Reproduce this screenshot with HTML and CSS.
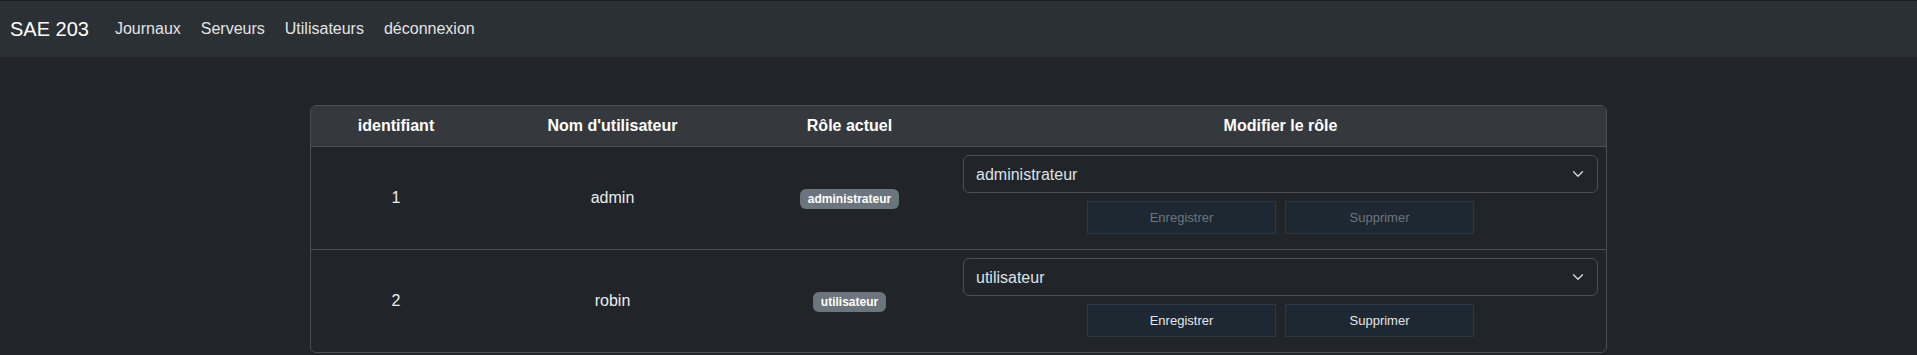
FILE: index.html
```html
<!DOCTYPE html>
<html lang="fr">
<head>
  <meta charset="UTF-8">
  <meta name="viewport" content="width=device-width, initial-scale=1.0">
  <title>SAE 203 - Utilisateurs</title>
  <link rel="stylesheet" href="styles.css">
</head>
<body>
  <!-- Barre de navigation -->
  <nav class="navbar">
    <a class="brand" href="#">SAE 203</a>
    <ul class="nav-links">
      <li><a href="#">Journaux</a></li>
      <li><a href="#">Serveurs</a></li>
      <li><a href="#">Utilisateurs</a></li>
      <li><a href="#">déconnexion</a></li>
    </ul>
  </nav>

  <!-- Liste des utilisateurs -->
  <div class="container">
    <div class="table-card">
      <table class="users">
        <thead>
          <tr>
            <th class="col-id">identifiant</th>
            <th class="col-name">Nom d'utilisateur</th>
            <th class="col-role">Rôle actuel</th>
            <th class="col-edit">Modifier le rôle</th>
          </tr>
        </thead>
        <tbody>
          <tr>
            <td>1</td>
            <td>admin</td>
            <td><span class="badge">administrateur</span></td>
            <td>
              <div class="select-wrap">
                <select>
                  <option selected>administrateur</option>
                  <option>utilisateur</option>
                </select>
                <svg class="chevron" viewBox="0 0 16 16"><path d="M2 5l6 6 6-6" fill="none" stroke="#dee2e6" stroke-width="1.6" stroke-linecap="round" stroke-linejoin="round"/></svg>
              </div>
              <div class="actions">
                <button type="button" disabled>Enregistrer</button>
                <button type="button" disabled>Supprimer</button>
              </div>
            </td>
          </tr>
          <tr>
            <td>2</td>
            <td>robin</td>
            <td><span class="badge">utilisateur</span></td>
            <td>
              <div class="select-wrap">
                <select>
                  <option>administrateur</option>
                  <option selected>utilisateur</option>
                </select>
                <svg class="chevron" viewBox="0 0 16 16"><path d="M2 5l6 6 6-6" fill="none" stroke="#dee2e6" stroke-width="1.6" stroke-linecap="round" stroke-linejoin="round"/></svg>
              </div>
              <div class="actions">
                <button type="button">Enregistrer</button>
                <button type="button">Supprimer</button>
              </div>
            </td>
          </tr>
        </tbody>
      </table>
    </div>
  </div>
</body>
</html>
```

FILE: styles.css
```css
* {
  margin: 0;
  padding: 0;
  box-sizing: border-box;
}
body {
  font-family: 'Liberation Sans', Arial, sans-serif;
  font-size: 16px;
  line-height: 1.5;
  background: #212529;
  color: #dee2e6;
}
/* Barre de navigation */
.navbar {
  display: flex;
  align-items: center;
  height: 57px;
  padding: 0 10px 0 10px;
  background: #2b3035;
  border-top: 1px solid #1c1f23;
}
.brand {
  font-size: 20px;
  color: #fff;
  text-decoration: none;
  margin-right: 16px;
}
.nav-links {
  display: flex;
  list-style: none;
}
.nav-links a {
  display: block;
  padding: 8px 10px;
  color: #e2e4e7;
  text-decoration: none;
}
/* Tableau */
.container {
  width: 1297px;
  margin: 48px auto 0 auto;
}
.table-card {
  border: 1px solid #4a4f55;
  border-radius: 6px;
  overflow: hidden;
}
.users {
  width: 100%;
  border-collapse: collapse;
  table-layout: fixed;
  text-align: center;
}
.users th {
  background: #35393e;
  color: #fff;
  font-weight: bold;
  padding: 8px;
  height: 40px;
}
.col-id { width: 170px; }
.col-name { width: 263px; }
.col-role { width: 211px; }
.users td {
  border-top: 1px solid #495057;
  padding: 8px;
  vertical-align: middle;
  color: #eceef0;
}
.badge {
  display: inline-block;
  background: #6c757d;
  color: #fff;
  font-size: 12px;
  font-weight: bold;
  line-height: 1;
  padding: 4px 8px;
  border-radius: 6px;
}
.select-wrap {
  position: relative;
}
.select-wrap select {
  display: block;
  width: 100%;
  height: 38px;
  padding: 6px 36px 6px 12px;
  font-family: inherit;
  font-size: 16px;
  color: #dee2e6;
  background: #212529;
  border: 1px solid #495057;
  border-radius: 6px;
  appearance: none;
}
.chevron {
  position: absolute;
  right: 14px;
  top: 13px;
  width: 12px;
  height: 12px;
}
.actions {
  display: flex;
  justify-content: center;
  gap: 9px;
  margin: 8px 0 7px 0;
}
.actions button {
  width: 189px;
  height: 33px;
  font-family: inherit;
  font-size: 13px;
  color: #e4e6e8;
  background: #1e2832;
  border: 1px solid #2b3947;
  border-radius: 0;
  cursor: pointer;
}
.actions button:disabled {
  color: #6c757d;
  cursor: default;
}
```
